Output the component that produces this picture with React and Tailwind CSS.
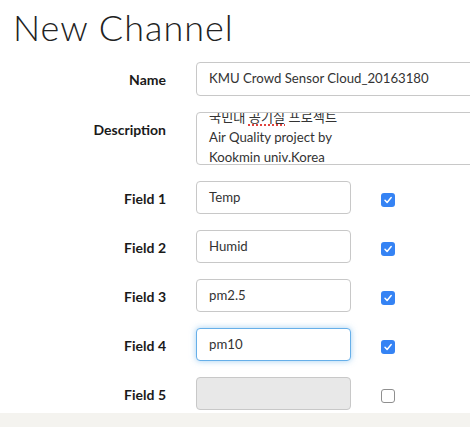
import React from "react";

const fields = [
    { label: "Field 1", value: "Temp", checked: true },
    { label: "Field 2", value: "Humid", checked: true },
    { label: "Field 3", value: "pm2.5", checked: true },
    { label: "Field 4", value: "pm10", checked: true, focused: true },
    { label: "Field 5", value: "", checked: false, disabled: true },
]

function Check({ checked }) {
    if (checked) {
        return (
            <span className="w-[14px] h-[14px] rounded-[3px] bg-[#3583f4] flex items-center justify-center mt-[5px]">
                <svg width="10" height="10" viewBox="0 0 10 10" fill="none">
                    <path d="M2 5.2 L4.1 7.4 L8.2 2.6" stroke="white" strokeWidth="1.5" strokeLinecap="round" strokeLinejoin="round" />
                </svg>
            </span>
        )
    }
    return <span className="w-[14px] h-[14px] rounded-[3px] bg-white border border-[#8f8f8f] mt-[5px]" />
}

function App() {
    return (
        <div className="w-[470px] h-[427px] overflow-hidden bg-[#f4f3ef] flex flex-col font-['Lato','Noto_Sans_CJK_KR',sans-serif]">
            <div className="bg-white pt-[9px] pb-[3px]">
                <h1 className="pl-[13px] text-[36px] leading-[36px] font-light text-[#222] tracking-[1px]">
                    New Channel
                </h1>

                <div className="mt-[17px] flex flex-col gap-4">
                    <div className="flex items-center">
                        <label className="w-[166px] shrink-0 text-right text-[14px] font-bold text-[#1a1a1a]">Name</label>
                        <div className="ml-[30px] w-[300px] shrink-0 h-[34px] border border-[#c8c8c8] rounded-[4px] px-3 flex items-center text-[13.2px] text-[#333]">
                            KMU Crowd Sensor Cloud_20163180
                        </div>
                    </div>

                    <div className="flex items-start">
                        <label className="w-[166px] shrink-0 text-right text-[14px] font-bold text-[#1a1a1a] pt-[7px]">Description</label>
                        <div className="ml-[30px] w-[300px] shrink-0 h-[53px] border border-[#c8c8c8] rounded-[4px] px-3 overflow-hidden text-[13.2px] leading-[20px] text-[#333]">
                            <div className="-mt-[6px]">
                                <div>
                                    국민대 <span className="underline decoration-dotted decoration-[#e0443e] decoration-2 underline-offset-2">공기질</span> 프로젝트
                                </div>
                                <div>Air Quality project by</div>
                                <div>
                                    Kookmin <span className="underline decoration-dotted decoration-[#e0443e] decoration-2 underline-offset-2">univ.Korea</span>
                                </div>
                            </div>
                        </div>
                    </div>

                    {fields.map((f) => (
                        <div key={f.label} className="flex items-center">
                            <label className="w-[166px] shrink-0 text-right text-[14px] font-bold text-[#1a1a1a] pt-[2px]">{f.label}</label>
                            <div
                                className={
                                    f.focused
                                        ? "ml-[30px] w-[155px] shrink-0 h-[33px] border border-[#66afe9] shadow-[0_0_6px_rgba(102,175,233,0.6)] rounded-[4px] px-3 flex items-center text-[13.2px] text-[#333] bg-white"
                                        : f.disabled
                                            ? "ml-[30px] w-[155px] shrink-0 h-[33px] border border-[#c8c8c8] rounded-[4px] px-3 flex items-center bg-[#e8e8e8]"
                                            : "ml-[30px] w-[155px] shrink-0 h-[33px] border border-[#c8c8c8] rounded-[4px] px-3 flex items-center text-[13.2px] text-[#333] bg-white"
                                }
                            >
                                {f.value}
                            </div>
                            <div className="ml-[30px] flex">
                                <Check checked={f.checked} />
                            </div>
                        </div>
                    ))}
                </div>
            </div>
        </div>
    );
}

export default App;
